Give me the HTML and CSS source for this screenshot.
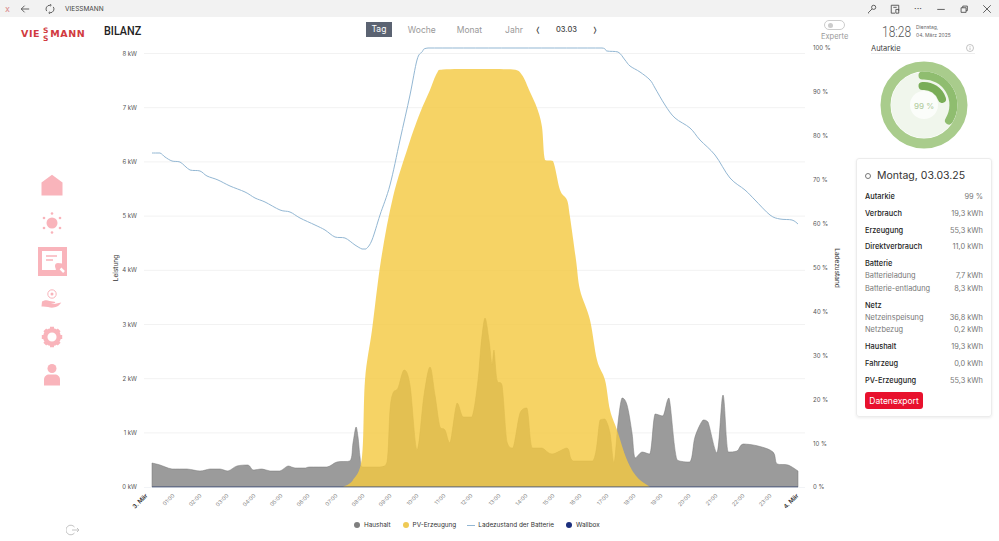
FILE: index.html
```html
<!DOCTYPE html>
<html lang="de">
<head>
    <meta charset="UTF-8">
    <meta name="viewport" content="width=device-width, initial-scale=1.0">
    <title>VIESSMANN</title>
    <link rel="stylesheet" href="styles.css">
</head>
<body>
    <header class="titlebar">
        <div class="titlebar-left">
            <span class="close-x">x</span>
            <svg class="tb-icon" viewBox="0 0 12 12"><path d="M11 6H1.500M5.500 2L1.500 6l4 4"/></svg>
            <svg class="tb-icon" viewBox="0 0 12 12"><path d="M2 8.500A4.500 4.500 0 0 1 6 1.500M10 3.500A4.500 4.500 0 0 1 6 10.500M6 .3l1.500 1.200L6 2.700M6 9.300l-1.500 1.200L6 11.700"/></svg>
            <span class="app-name">VIESSMANN</span>
        </div>
        <div class="titlebar-right">
            <svg class="tb-icon" viewBox="0 0 12 12"><circle cx="8" cy="4" r="2.500"/><path d="M6 6l-4.500 4.500 1 .8"/></svg>
            <svg class="tb-icon" viewBox="0 0 12 12"><path d="M6 11H1.500V1.500h9V8M7 6.500h3.500V11H7zM4 4h4"/></svg>
            <span class="tb-dots">···</span>
            <svg class="tb-icon" viewBox="0 0 12 12"><path d="M1.500 6.500h9"/></svg>
            <svg class="tb-icon" viewBox="0 0 12 12"><path d="M2.500 4.500h6v5.500h-6zM4.500 4.500V2.500h5.500v5.500H8.500"/></svg>
            <svg class="tb-icon" viewBox="0 0 12 12"><path d="M1.500 1.500l9 9M10.500 1.500l-9 9"/></svg>
        </div>
    </header>

    <div class="app">
        <aside class="sidebar">
            <div class="logo"><span>VIE</span><span class="logo-ss">SS</span><span>MANN</span></div>
            <nav class="nav">
                <a class="nav-item">
                    <svg width="22" height="22" viewBox="0 0 22 22"><path d="M.5 21.500V8.500L11 .8l10.500 7.700v13z"/></svg>
                </a>
                <a class="nav-item">
                    <svg width="22" height="22" viewBox="0 0 22 22"><circle cx="11" cy="11" r="5.500"/><circle cx="11" cy="1.500" r="1.300"/><circle cx="11" cy="20.500" r="1.300"/><circle cx="3" cy="6" r="1.300"/><circle cx="19" cy="6" r="1.300"/><circle cx="3" cy="16" r="1.300"/><circle cx="19" cy="16" r="1.300"/></svg>
                </a>
                <a class="nav-item">
                    <svg width="29" height="29" viewBox="0 0 29 29"><rect width="29" height="29"/><path class="cut" d="M4 4h20v12.500a5 5 0 0 0-6 6.500H4z"/><path class="line" d="M8 9h11M8 13h7"/><circle cx="20" cy="19" r="3"/><path class="line-w" d="M22.500 21.500l3.500 3.500"/></svg>
                </a>
                <a class="nav-item">
                    <svg width="22" height="22" viewBox="0 0 22 22"><circle class="ring" cx="11" cy="6" r="4.200"/><circle cx="11" cy="6" r="1.500"/><path d="M1 13.500c3-1.500 5-1.500 7.500-.5l5 .7c1.200.3.800 1.500-.2 1.500l-3.500.2 3.500.5 7-1.500c-1.500 2.500-4.500 4.800-8 5.200-4 .4-6-1.500-11.800-1.100z"/></svg>
                </a>
                <a class="nav-item">
                    <svg width="22" height="22" viewBox="0 0 22 22"><circle class="ring-thick" cx="11" cy="11" r="6.800"/><g class="teeth"><path d="M11 .8v3M11 18.200v3M.8 11h3M18.200 11h3M3.800 3.800l2.100 2.100M16.100 16.100l2.100 2.100M3.800 18.200l2.100-2.100M16.100 5.900l2.100-2.100"/></g></svg>
                </a>
                <a class="nav-item">
                    <svg width="16" height="22" viewBox="0 0 16 22"><circle cx="8" cy="4.500" r="4.500"/><path d="M0 21.500v-6c0-3 2.500-5 5-5h6c2.500 0 5 2 5 5v6z"/></svg>
                </a>
            </nav>
            <svg class="logout" width="14" height="12" viewBox="0 0 14 12"><path d="M8.500 3A4.800 4.800 0 1 0 8.500 9M6 6h7M11 4l2 2-2 2"/></svg>
        </aside>

        <main class="center">
            <div class="topbar">
                <h1 class="page-title"><span>BILANZ</span></h1>
                <div class="tabs">
                    <span class="tab tab-active">Tag</span>
                    <span class="tab">Woche</span>
                    <span class="tab">Monat</span>
                    <span class="tab">Jahr</span>
                    <span class="date-nav"><span>❬</span><b>03.03</b><span>❭</span></span>
                </div>
                <div class="expert">
                    <span class="toggle"><i></i></span>
                    <span>Experte</span>
                </div>
            </div>

            <svg class="chart" width="756" height="470" viewBox="100 42 756 470">
                <g class="grid">
                    <path d="M144 53.500H805M144 107.700H805M144 161.900H805M144 216.100H805M144 270.300H805M144 324.500H805M144 378.700H805M144 432.900H805"/>
                </g>
                <g class="axis-left">
                    <text x="137" y="56">8 kW</text>
                    <text x="137" y="110">7 kW</text>
                    <text x="137" y="164">6 kW</text>
                    <text x="137" y="218">5 kW</text>
                    <text x="137" y="272">4 kW</text>
                    <text x="137" y="327">3 kW</text>
                    <text x="137" y="381">2 kW</text>
                    <text x="137" y="435">1 kW</text>
                    <text x="137" y="489">0 kW</text>
                </g>
                <g class="axis-right">
                    <text x="813" y="50">100 %</text>
                    <text x="813" y="94">90 %</text>
                    <text x="813" y="138">80 %</text>
                    <text x="813" y="182">70 %</text>
                    <text x="813" y="226">60 %</text>
                    <text x="813" y="270">50 %</text>
                    <text x="813" y="314">40 %</text>
                    <text x="813" y="358">30 %</text>
                    <text x="813" y="402">20 %</text>
                    <text x="813" y="446">10 %</text>
                    <text x="813" y="489">0 %</text>
                </g>
                <text class="axis-title" transform="rotate(-90 117.500 268)" x="117.500" y="268">Leistung</text>
                <text class="axis-title" transform="rotate(90 835 268)" x="835" y="268">Ladezustand</text>

                <path class="haushalt" id="haushaltArea"/>
                <path class="pv" id="pvArea"/>
                <path class="battery" id="batteryLine"/>
                <path class="baseline" d="M152 487H798"/>
                <path class="axis-line" d="M144 487.500H805"/>

                <g class="ticks">
                    <text class="tick-day" transform="rotate(-45 148 496)" x="148" y="496">3. Mär</text>
                    <text transform="rotate(-45 175 496)" x="175" y="496">01:00</text>
                    <text transform="rotate(-45 202 496)" x="202" y="496">02:00</text>
                    <text transform="rotate(-45 229 496)" x="229" y="496">03:00</text>
                    <text transform="rotate(-45 256 496)" x="256" y="496">04:00</text>
                    <text transform="rotate(-45 283 496)" x="283" y="496">05:00</text>
                    <text transform="rotate(-45 310 496)" x="310" y="496">06:00</text>
                    <text transform="rotate(-45 338 496)" x="338" y="496">07:00</text>
                    <text transform="rotate(-45 365 496)" x="365" y="496">08:00</text>
                    <text transform="rotate(-45 392 496)" x="392" y="496">09:00</text>
                    <text transform="rotate(-45 419 496)" x="419" y="496">10:00</text>
                    <text transform="rotate(-45 446 496)" x="446" y="496">11:00</text>
                    <text transform="rotate(-45 473 496)" x="473" y="496">12:00</text>
                    <text transform="rotate(-45 501 496)" x="501" y="496">13:00</text>
                    <text transform="rotate(-45 528 496)" x="528" y="496">14:00</text>
                    <text transform="rotate(-45 555 496)" x="555" y="496">15:00</text>
                    <text transform="rotate(-45 582 496)" x="582" y="496">16:00</text>
                    <text transform="rotate(-45 609 496)" x="609" y="496">17:00</text>
                    <text transform="rotate(-45 636 496)" x="636" y="496">18:00</text>
                    <text transform="rotate(-45 663 496)" x="663" y="496">19:00</text>
                    <text transform="rotate(-45 691 496)" x="691" y="496">20:00</text>
                    <text transform="rotate(-45 718 496)" x="718" y="496">21:00</text>
                    <text transform="rotate(-45 745 496)" x="745" y="496">22:00</text>
                    <text transform="rotate(-45 772 496)" x="772" y="496">23:00</text>
                    <text class="tick-day" transform="rotate(-45 799 496)" x="799" y="496">4. Mär</text>
                </g>
            </svg>

            <ul class="legend">
                <li><i class="dot dot-grey"></i>Haushalt</li>
                <li><i class="dot dot-yellow"></i>PV-Erzeugung</li>
                <li class="legend-line"><i class="dash"></i>Ladezustand der Batterie</li>
                <li><i class="dot dot-navy"></i>Wallbox</li>
            </ul>
        </main>

        <section class="panel">
            <div class="clock">
                <span class="clock-time"><span>18:28</span></span>
                <span class="clock-date">Dienstag,<br>04. März 2025</span>
            </div>
            <div class="gauge-head">
                <span>Autarkie</span>
                <svg width="8" height="8" viewBox="0 0 8 8"><circle cx="4" cy="4" r="3.500"/><path d="M4 3.500V6M4 2v.8"/></svg>
            </div>
            <svg class="gauge" width="88" height="88" viewBox="0 0 88 88">
                <circle cx="44" cy="44" r="38.500" fill="none" stroke="#a9cc8c" stroke-width="10"/>
                <circle cx="44" cy="44" r="33" fill="#f0f6ec"/>
                <circle cx="44" cy="44" r="14" fill="#fbfdfa"/>
                <path d="M42.500 14.500A29.500 29.500 0 0 1 69 59.500" fill="none" stroke="#8fbd6f" stroke-width="8" stroke-linecap="round"/>
                <path d="M42.500 25A19 19 0 0 1 62 38" fill="none" stroke="#79ad57" stroke-width="8" stroke-linecap="round"/>
                <text x="44" y="47.500" text-anchor="middle">99 %</text>
            </svg>

            <div class="card">
                <div class="card-title"><i class="card-icon"></i>Montag, 03.03.25</div>
                <div class="row row-main"><span>Autarkie</span><span>99 %</span></div>
                <div class="row row-main"><span>Verbrauch</span><span>19,3 kWh</span></div>
                <div class="row row-main"><span>Erzeugung</span><span>55,3 kWh</span></div>
                <div class="row row-main"><span>Direktverbrauch</span><span>11,0 kWh</span></div>
                <div class="row row-main"><span>Batterie</span></div>
                <div class="row row-sub"><span>Batterieladung</span><span>7,7 kWh</span></div>
                <div class="row row-sub"><span>Batterie-entladung</span><span>8,3 kWh</span></div>
                <div class="row row-main row-group"><span>Netz</span></div>
                <div class="row row-sub"><span>Netzeinspeisung</span><span>36,8 kWh</span></div>
                <div class="row row-sub"><span>Netzbezug</span><span>0,2 kWh</span></div>
                <div class="row row-main row-group"><span>Haushalt</span><span>19,3 kWh</span></div>
                <div class="row row-main"><span>Fahrzeug</span><span>0,0 kWh</span></div>
                <div class="row row-main"><span>PV-Erzeugung</span><span>55,3 kWh</span></div>
                <button class="export-btn" type="button">Datenexport</button>
            </div>
        </section>
    </div>

    <script src="chart.js"></script>
</body>
</html>
```

FILE: styles.css
```css
* {
    box-sizing: border-box;
}
html, body {
    margin: 0;
    height: 541px;
    overflow: hidden;
}
body {
    font-family: Inter, "Liberation Sans", sans-serif;
    background-color: white;
    color: #222;
}

/* window title bar */
.titlebar {
    display: flex;
    justify-content: space-between;
    align-items: center;
    height: 17px;
    background-color: #f2f2f2;
}
.titlebar-left {
    display: flex;
    align-items: center;
    padding-left: 5px;
}
.close-x {
    width: 15px;
    font-size: 9px;
    line-height: 10px;
    color: #d98a8a;
}
.tb-icon {
    width: 10px;
    height: 10px;
    fill: none;
    stroke: #444;
    stroke-width: 1;
}
.titlebar-left .tb-icon {
    margin-right: 15px;
}
.titlebar-left .tb-icon + .tb-icon {
    margin-right: 10px;
}
.app-name {
    font-size: 6.5px;
    color: #444;
}
.titlebar-right {
    display: flex;
    align-items: center;
    gap: 13px;
    padding-right: 7px;
}
.tb-dots {
    width: 10px;
    font-size: 9px;
    line-height: 10px;
    text-align: center;
    color: #444;
}

.app {
    display: flex;
    height: 524px;
}

/* left navigation */
.sidebar {
    display: flex;
    flex-direction: column;
    width: 100px;
    padding: 9px 0 5px;
}
.logo {
    display: flex;
    align-items: center;
    height: 15px;
    padding-left: 21px;
    font-family: "DejaVu Sans", sans-serif;
    font-size: 9.500px;
    font-weight: bold;
    letter-spacing: .6px;
    color: #d13a40;
}
.logo-ss {
    margin: 0 1px;
    writing-mode: vertical-rl;
    text-orientation: upright;
    font-size: 7.500px;
    line-height: 8px;
    letter-spacing: -1.500px;
}
.nav {
    display: grid;
    grid-auto-rows: 38px;
    justify-items: center;
    align-items: center;
    width: 104px;
    margin-top: 125px;
}
.nav-item {
    display: flex;
}
.nav-item svg {
    fill: #f9b4bb;
}
.nav-item .cut {
    fill: white;
}
.nav-item .line {
    fill: none;
    stroke: #f9b4bb;
    stroke-width: 1.500;
}
.nav-item .line-w {
    fill: none;
    stroke: white;
    stroke-width: 2.500;
}
.nav-item .ring {
    fill: none;
    stroke: #f9b4bb;
    stroke-width: 1;
}
.nav-item .ring-thick {
    fill: none;
    stroke: #f9b4bb;
    stroke-width: 4.500;
}
.nav-item .teeth {
    fill: none;
    stroke: #f9b4bb;
    stroke-width: 4;
}
.logout {
    margin: auto 0 0 66px;
    fill: none;
    stroke: #c4c4c4;
    stroke-width: 1;
}

/* chart column */
.center {
    display: flex;
    flex-direction: column;
    width: 756px;
}
.topbar {
    display: flex;
    align-items: flex-start;
    height: 25px;
    padding-top: 5px;
}
.page-title {
    width: 266px;
    margin: 0;
    padding: 1px 0 0 4px;
    font-family: Roboto, sans-serif;
    font-size: 13.500px;
    line-height: 15px;
    font-weight: 500;
    color: #222;
}
/* the app's heading face is condensed, none is installed */
.page-title span, .clock-time span {
    display: inline-block;
    transform: scaleX(.8);
    transform-origin: left center;
}
.tabs {
    display: flex;
    align-items: center;
    gap: 16px;
    width: 455px;
    font-size: 8.500px;
    color: #999;
}
.tab-active {
    padding: 2px 5.500px;
    line-height: 11px;
    background-color: #5b6372;
    color: white;
}
.tab:nth-child(2), .tab:nth-child(4) {
    margin-right: 5px;
}
.tab:nth-child(3) {
    margin-right: 7px;
}
.date-nav {
    display: flex;
    align-items: center;
    gap: 15px;
    margin-left: -9px;
    color: #444;
    font-size: 7px;
}
.date-nav b {
    font-size: 7.500px;
    font-weight: 500;
    color: #444;
}
.expert {
    display: flex;
    flex-direction: column;
    align-items: center;
    gap: 2px;
    margin-top: -2px;
    font-size: 7.500px;
    color: #999;
}
.toggle {
    display: flex;
    align-items: center;
    width: 21px;
    height: 10px;
    padding-left: 3px;
    border: 1px solid #ccc;
    border-radius: 5px;
}
.toggle i {
    width: 5px;
    height: 5px;
    border-radius: 50%;
    background-color: #ccc;
}

.chart {
    display: block;
}
.chart text {
    font-size: 6px;
    fill: #555;
}
.grid path {
    fill: none;
    stroke: #f2f2f2;
    stroke-width: 1;
}
.axis-left text {
    text-anchor: end;
}
.chart .axis-title {
    text-anchor: middle;
    fill: #333;
    font-size: 6.500px;
}
.haushalt {
    fill: #9b9b9b;
    stroke: #777;
    stroke-width: .5;
}
.pv {
    fill: #f4c941;
    fill-opacity: .81;
}
.battery {
    fill: none;
    stroke: #93b7d3;
    stroke-width: 1;
}
.baseline {
    fill: none;
    stroke: #3f4f7a;
    stroke-width: 1;
}
.axis-line {
    fill: none;
    stroke: #e4e8ef;
    stroke-width: .5;
}
.ticks text {
    text-anchor: end;
    fill: #888;
    font-size: 5.500px;
}
.ticks .tick-day {
    fill: #333;
    font-size: 6px;
    font-weight: 600;
}

.legend {
    display: flex;
    gap: 12px;
    margin: 8.500px 0 0;
    padding: 0 0 0 254px;
    list-style: none;
    font-size: 6.400px;
    line-height: 9px;
    color: #333;
}
.legend li {
    display: flex;
    align-items: center;
    gap: 4px;
}
.legend .legend-line {
    gap: 3px;
    margin-left: -1px;
}
.dot {
    width: 6px;
    height: 6px;
    border-radius: 50%;
}
.dot-grey {
    background-color: #7f7f7f;
}
.dot-yellow {
    background-color: #efca55;
}
.dot-navy {
    background-color: #1c2f7d;
}
.dash {
    width: 8px;
    height: 1px;
    background-color: #93b7d3;
}

/* right panel */
.panel {
    display: flex;
    flex-direction: column;
    width: 143px;
}
.clock {
    display: flex;
    align-items: flex-start;
    gap: 5px;
    height: 25px;
    padding: 6px 0 0 26px;
}
.clock-time {
    width: 29px;
    font-family: Roboto, sans-serif;
    font-size: 15px;
    line-height: 19px;
    font-weight: 300;
    white-space: nowrap;
    color: #555;
}
.clock-date {
    font-size: 5px;
    line-height: 8px;
    color: #666;
}
.gauge-head {
    display: flex;
    justify-content: space-between;
    align-items: center;
    width: 104px;
    height: 12px;
    margin-left: 15px;
    padding-top: 1px;
    border-bottom: 1px solid #eee;
    font-size: 7.500px;
    color: #444;
}
.gauge-head svg {
    margin-right: 1px;
    fill: none;
    stroke: #aaa;
    stroke-width: .7;
}
.gauge {
    display: block;
    margin: 7px 0 0 24px;
}
.gauge text {
    font-size: 8px;
    font-weight: 500;
    fill: #b4cea3;
}
.card {
    width: 136px;
    height: 259px;
    margin-top: 9px;
    padding: 8px 8px 0;
    border: 1px solid #ececec;
    border-radius: 3px;
    box-shadow: 0 1px 3px rgba(0,0,0,0.08);
}
.card-title {
    display: flex;
    align-items: center;
    gap: 6px;
    height: 17px;
    margin-bottom: 2px;
    padding-left: 0;
    font-size: 10.500px;
    white-space: nowrap;
    color: #333;
}
.card-icon {
    width: 6px;
    height: 6px;
    border: 1px solid #777;
    border-radius: 50%;
}
.row {
    display: flex;
    justify-content: space-between;
    align-items: center;
    padding-top: 6px;
    font-size: 7.400px;
    line-height: 10.800px;
    color: #777;
}
.row-main span:first-child {
    font-weight: 500;
    color: #222;
}
.row-sub {
    padding-top: 1.500px;
}
.row-sub span:first-child {
    color: #777;
}
.export-btn {
    display: block;
    width: 58px;
    height: 17px;
    margin-top: 6px;
    padding: 0;
    border: none;
    border-radius: 3px;
    background-color: #e8112d;
    color: white;
    font-family: inherit;
    font-size: 8.500px;
}
```

FILE: chart.js
```js
// points are in chart pixels, read off the day curve
const haushalt = [[152,463],[160,465],[172,469],[187,469],[200,471],[210,469],[220,469],[228,471],[237,466],[248,465],[253,470],[262,469],[270,471],[280,471],[288,466],[295,468],[305,468],[310,467],[327,467],[337,462],[350,461],[353,443],[356,427],[358,437],[360,457],[362,467],[380,467],[387,462],[390,410],[393,393],[398,388],[404,370],[410,385],[417,450],[424,395],[430,367],[435,395],[440,427],[445,430],[450,443],[457,403],[463,417],[472,417],[478,380],[481,345],[485,318],[489,340],[492,365],[494,350],[497,380],[502,385],[507,442],[513,448],[520,413],[527,408],[532,448],[542,448],[552,454],[567,448],[573,461],[593,461],[600,420],[605,419],[610,433],[614,463],[618,423],[622,398],[627,405],[632,433],[635,458],[642,452],[650,454],[655,414],[663,416],[669,398],[677,460],[690,462],[695,437],[703,420],[708,422],[717,453],[723,395],[728,452],[737,451],[743,444],[758,446],[773,452],[777,464],[788,465],[798,471]];
const pv = [[343,487],[353,480],[362,457],[365,380],[372,330],[381,260],[393,197],[408,147],[420,113],[430,90],[437,73],[443,69.500],[480,69],[513,69.500],[522,75],[530,92],[537,108],[542,127],[545,160],[553,161],[560,190],[567,200],[570,217],[576,260],[580,290],[590,320],[597,360],[605,380],[610,410],[617,430],[627,460],[637,477],[650,487]];
const battery = [[152,153],[160,153],[165,157],[172,161],[180,162],[190,170],[200,171],[207,176],[218,180],[230,186],[245,192],[255,198],[265,202],[280,210],[290,212],[300,218],[315,225],[325,230],[335,237],[345,238],[355,245],[362,249],[366,249],[372,240],[380,215],[390,185],[400,140],[410,95],[417,60],[422,52],[428,48],[602,48],[607,51],[618,52],[625,60],[630,66],[640,72],[650,80],[655,88],[665,105],[675,118],[690,128],[700,140],[715,155],[730,178],[745,190],[755,200],[770,215],[780,219],[792,220],[798,224]];

function clamp(v, a, b) {
    return Math.min(Math.max(a, b), Math.max(Math.min(a, b), v));
}

function smooth(points) {
    let d = `M${points[0][0]} ${points[0][1]}`;
    for (let i = 0; i < points.length - 1; i++) {
        const p0 = points[i - 1] || points[i];
        const p1 = points[i];
        const p2 = points[i + 1];
        const p3 = points[i + 2] || p2;
        // keep the handles inside the segment so peaks do not overshoot
        const c1x = clamp(p1[0] + (p2[0] - p0[0]) / 6, p1[0], p2[0]);
        const c1y = clamp(p1[1] + (p2[1] - p0[1]) / 6, p1[1], p2[1]);
        const c2x = clamp(p2[0] - (p3[0] - p1[0]) / 6, p1[0], p2[0]);
        const c2y = clamp(p2[1] - (p3[1] - p1[1]) / 6, p1[1], p2[1]);
        d += `C${c1x.toFixed(1)} ${c1y.toFixed(1)} ${c2x.toFixed(1)} ${c2y.toFixed(1)} ${p2[0]} ${p2[1]}`;
    }
    return d;
}

function area(points) {
    const first = points[0][0];
    const last = points[points.length - 1][0];
    return `${smooth(points)}L${last} 487L${first} 487Z`;
}

document.getElementById('haushaltArea').setAttribute('d', area(haushalt));
document.getElementById('pvArea').setAttribute('d', area(pv));
document.getElementById('batteryLine').setAttribute('d', smooth(battery));
```
